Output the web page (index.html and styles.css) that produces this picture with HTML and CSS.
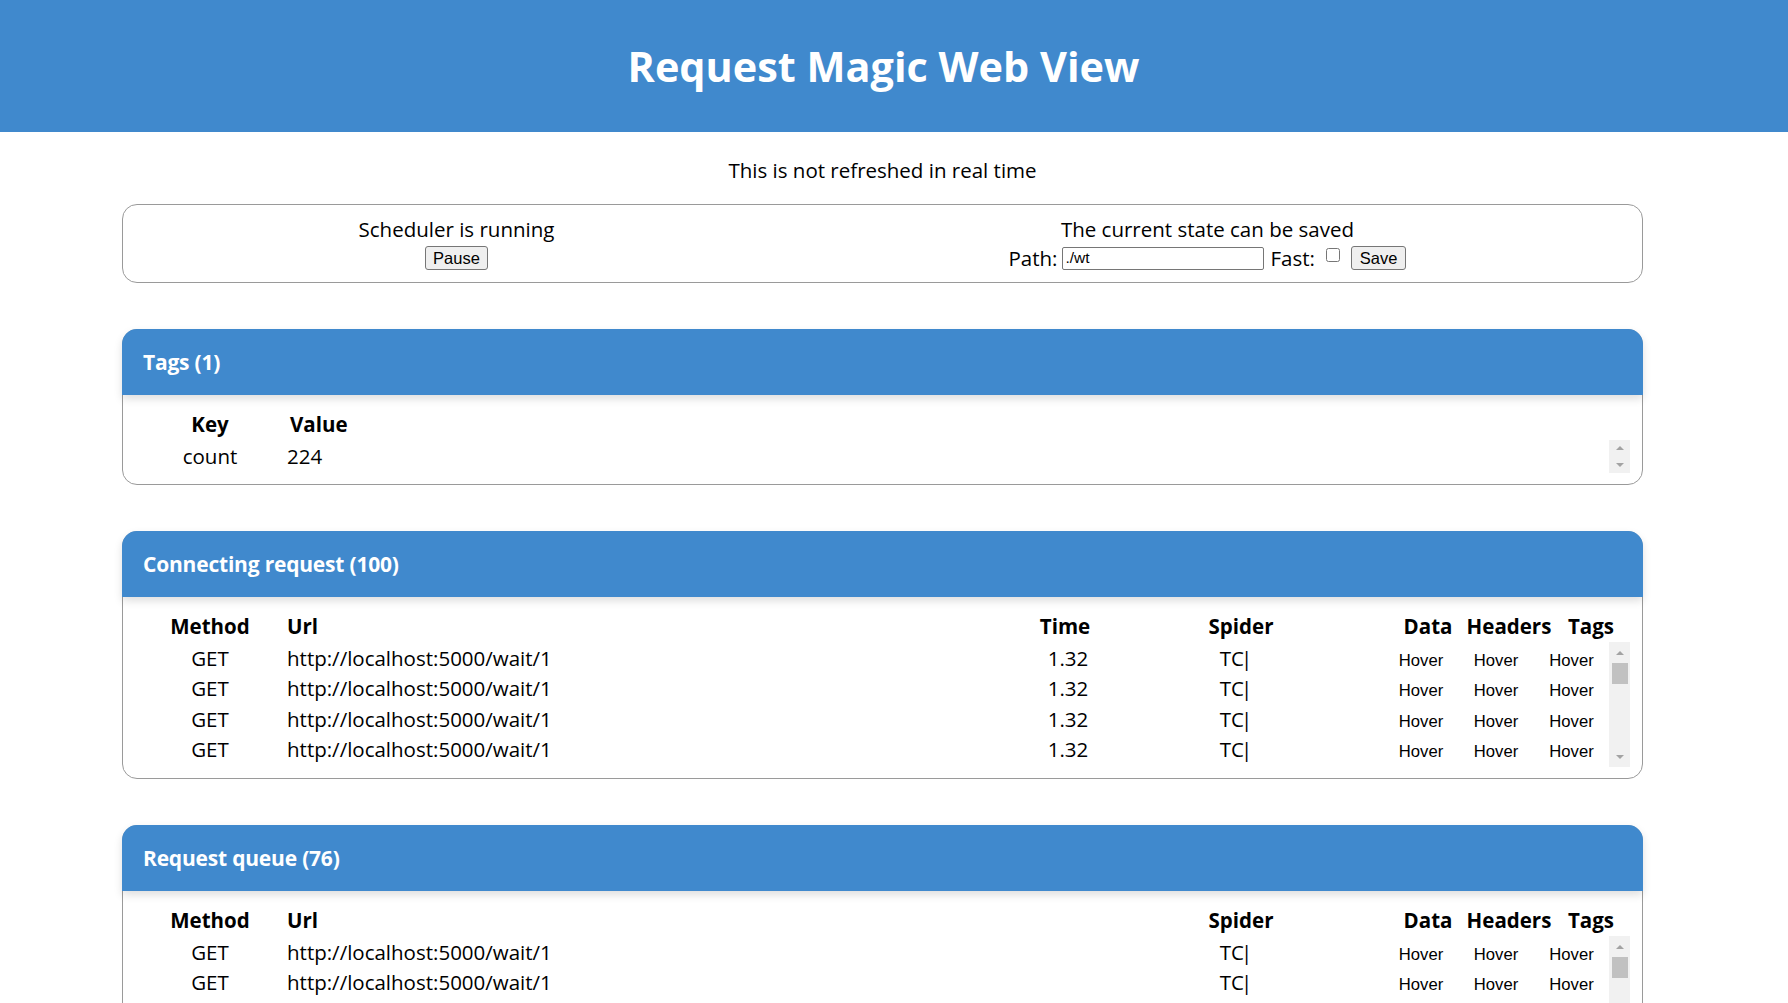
FILE: index.html
```html
<!DOCTYPE html>
<html lang="en">
<head>
<meta charset="utf-8">
<title>Request Magic Web View</title>
<link rel="stylesheet" href="styles.css">
</head>
<body>
<header class="topbar"><h1 class="title">Request Magic Web View</h1></header>
<main class="page">
  <p class="note">This is not refreshed in real time</p>
  <section class="controls">
    <div class="control">
      <div class="control-text">Scheduler is running</div>
      <div class="control-row"><button class="btn">Pause</button></div>
    </div>
    <div class="control">
      <div class="control-text">The current state can be saved</div>
      <div class="control-row">
        <span class="lbl">Path:</span>
        <input class="path" type="text" value="./wt">
        <span class="lbl lbl-fast">Fast:</span>
        <input class="chk" type="checkbox">
        <button class="btn btn-save">Save</button>
      </div>
    </div>
  </section>

  <section class="panel">
    <div class="panel-head">Tags (1)</div>
    <div class="panel-body">
      <div class="thead kv"><div class="c">Key</div><div class="l val-h">Value</div></div>
      <div class="scroll scroll-tags">
        <div class="rows">
          <div class="row kv-body"><div class="c">count</div><div class="l">224</div></div>
        </div>
        <div class="sbar"><span class="arr"><i class="tri up"></i></span><span class="arr"><i class="tri down"></i></span></div>
      </div>
    </div>
  </section>

  <section class="panel">
    <div class="panel-head">Connecting request (100)</div>
    <div class="panel-body">
      <div class="thead cols-h">
        <div class="c">Method</div><div class="l url-h">Url</div><div class="c">Time</div><div class="c spider-h">Spider</div><div class="c">Data</div><div class="c">Headers</div><div class="c">Tags</div>
      </div>
      <div class="scroll scroll-req">
        <div class="rows">
          <div class="row cols-b"><div class="c">GET</div><div class="l">http://localhost:5000/wait/1</div><div class="c">1.32</div><div class="c spider-b">TC<span class="bar">|</span></div><div class="c hov">Hover</div><div class="c hov">Hover</div><div class="c hov">Hover</div></div>
          <div class="row cols-b"><div class="c">GET</div><div class="l">http://localhost:5000/wait/1</div><div class="c">1.32</div><div class="c spider-b">TC<span class="bar">|</span></div><div class="c hov">Hover</div><div class="c hov">Hover</div><div class="c hov">Hover</div></div>
          <div class="row cols-b"><div class="c">GET</div><div class="l">http://localhost:5000/wait/1</div><div class="c">1.32</div><div class="c spider-b">TC<span class="bar">|</span></div><div class="c hov">Hover</div><div class="c hov">Hover</div><div class="c hov">Hover</div></div>
          <div class="row cols-b"><div class="c">GET</div><div class="l">http://localhost:5000/wait/1</div><div class="c">1.32</div><div class="c spider-b">TC<span class="bar">|</span></div><div class="c hov">Hover</div><div class="c hov">Hover</div><div class="c hov">Hover</div></div>
        </div>
        <div class="sbar"><span class="arr"><i class="tri up"></i></span><span class="thumb"></span><span class="grow"></span><span class="arr"><i class="tri down"></i></span></div>
      </div>
    </div>
  </section>

  <section class="panel">
    <div class="panel-head">Request queue (76)</div>
    <div class="panel-body">
      <div class="thead cols-h">
        <div class="c">Method</div><div class="l url-h">Url</div><div class="c"></div><div class="c spider-h">Spider</div><div class="c">Data</div><div class="c">Headers</div><div class="c">Tags</div>
      </div>
      <div class="scroll scroll-req">
        <div class="rows">
          <div class="row cols-b"><div class="c">GET</div><div class="l">http://localhost:5000/wait/1</div><div class="c"></div><div class="c spider-b">TC<span class="bar">|</span></div><div class="c hov">Hover</div><div class="c hov">Hover</div><div class="c hov">Hover</div></div>
          <div class="row cols-b"><div class="c">GET</div><div class="l">http://localhost:5000/wait/1</div><div class="c"></div><div class="c spider-b">TC<span class="bar">|</span></div><div class="c hov">Hover</div><div class="c hov">Hover</div><div class="c hov">Hover</div></div>
          <div class="row cols-b"><div class="c">GET</div><div class="l">http://localhost:5000/wait/1</div><div class="c"></div><div class="c spider-b">TC<span class="bar">|</span></div><div class="c hov">Hover</div><div class="c hov">Hover</div><div class="c hov">Hover</div></div>
          <div class="row cols-b"><div class="c">GET</div><div class="l">http://localhost:5000/wait/1</div><div class="c"></div><div class="c spider-b">TC<span class="bar">|</span></div><div class="c hov">Hover</div><div class="c hov">Hover</div><div class="c hov">Hover</div></div>
        </div>
        <div class="sbar"><span class="arr"><i class="tri up"></i></span><span class="thumb"></span><span class="grow"></span><span class="arr"><i class="tri down"></i></span></div>
      </div>
    </div>
  </section>
</main>
</body>
</html>
```

FILE: styles.css
```css
html, body {
  margin: 0;
  padding: 0;
  background: #ffffff;
}
body {
  font-family: "Open Sans", "Noto Sans", "DejaVu Sans", sans-serif;
  font-size: 20.5px;
  line-height: 27px;
  color: #000;
}

.topbar {
  background: #4089cd;
  height: 132px;
  box-sizing: border-box;
  padding-right: 21px;
  display: flex;
  align-items: center;
  justify-content: center;
}
.title {
  margin: 0;
  color: #fff;
  font-size: 41.4px;
  line-height: 56px;
  font-weight: 700;
}

.page {
  margin: 0 145px 0 122px;
  padding-bottom: 40px;
}

.note {
  margin: 25px 0 20px;
  text-align: center;
}

.controls {
  border: 1px solid #9a9a9a;
  border-radius: 15px;
  padding: 11px 0 12px;
  display: flex;
  justify-content: center;
  gap: 454px;
}
.control {
  display: flex;
  flex-direction: column;
  align-items: center;
}
.control-row {
  margin-top: 3px;
  height: 24px;
  display: flex;
  align-items: center;
}
.lbl {
  line-height: 24px;
}
.btn {
  font-family: "Liberation Sans", Arial, sans-serif;
  font-size: 16.5px;
  height: 24px;
  padding: 0 7px;
  background: #efefef;
  border: 1px solid #767676;
  border-radius: 3px;
  color: #000;
}
.path {
  font-family: "Liberation Sans", Arial, sans-serif;
  font-size: 15.5px;
  width: 202px;
  height: 23px;
  box-sizing: border-box;
  margin: 0 6px 0 5px;
  padding: 1px 2px;
  border: 1px solid #767676;
  border-radius: 2px;
}
.chk {
  width: 14px;
  height: 14px;
  margin: 0 11px 7px 11px;
}
.btn-save {
  padding: 0 8px;
}

.panel {
  margin-top: 46px;
  border: 1px solid #9a9a9a;
  border-radius: 15px;
}
.panel-head {
  margin: -1px -1px 0;
  height: 66px;
  background: #4089cd;
  border-radius: 15px 15px 0 0;
  color: #fff;
  font-weight: 700;
  font-size: 21px;
  letter-spacing: -0.2px;
  padding-left: 21px;
  display: flex;
  align-items: center;
  box-shadow: 0 4px 8px rgba(0, 0, 0, 0.13);
  position: relative;
}
.panel-body {
  padding: 14px 12px 11px 26px;
}

.thead {
  display: grid;
  height: 31px;
  box-sizing: border-box;
  padding-top: 2px;
  font-weight: 700;
}
.c { text-align: center; }
.l { text-align: left; }

.kv { grid-template-columns: 122px 1fr; }
.kv-body { grid-template-columns: 122px 1fr; }
.val-h { padding-left: 19px; }
.kv-body .l { padding-left: 16px; }

.cols-h { grid-template-columns: 122px 729px 130px 260px 76px 86px 78px; }
.cols-b { grid-template-columns: 122px 729px 136px 248px 74px 76px 75px; }
.url-h { padding-left: 16px; }
.cols-b .l { padding-left: 16px; }
.spider-h { padding-right: 38px; }
.spider-b { padding-right: 48px; }
.bar { margin-left: -3px; }

.scroll {
  display: flex;
  overflow: hidden;
}
.scroll-tags { height: 33px; }
.scroll-req { height: 125px; }
.rows {
  flex: 1;
  min-width: 0;
}
.row {
  display: grid;
  height: 30.3px;
  box-sizing: border-box;
  padding-top: 3px;
  align-items: baseline;
  white-space: nowrap;
}
.hov {
  font-family: "Liberation Sans", Arial, sans-serif;
  font-size: 16.67px;
}

.sbar {
  width: 21px;
  background: #f1f1f1;
  display: flex;
  flex-direction: column;
  align-items: center;
}
.arr {
  width: 21px;
  height: 21px;
  flex-shrink: 1;
  min-height: 0;
  display: flex;
  align-items: center;
  justify-content: center;
}
.tri {
  width: 0;
  height: 0;
  border-left: 4.5px solid transparent;
  border-right: 4.5px solid transparent;
}
.tri.up { border-bottom: 4px solid #a3a3a3; }
.tri.down { border-top: 4px solid #a3a3a3; }
.thumb {
  width: 16px;
  height: 21px;
  flex-shrink: 0;
  background: #c1c1c1;
}
.grow { flex: 1; }
```
